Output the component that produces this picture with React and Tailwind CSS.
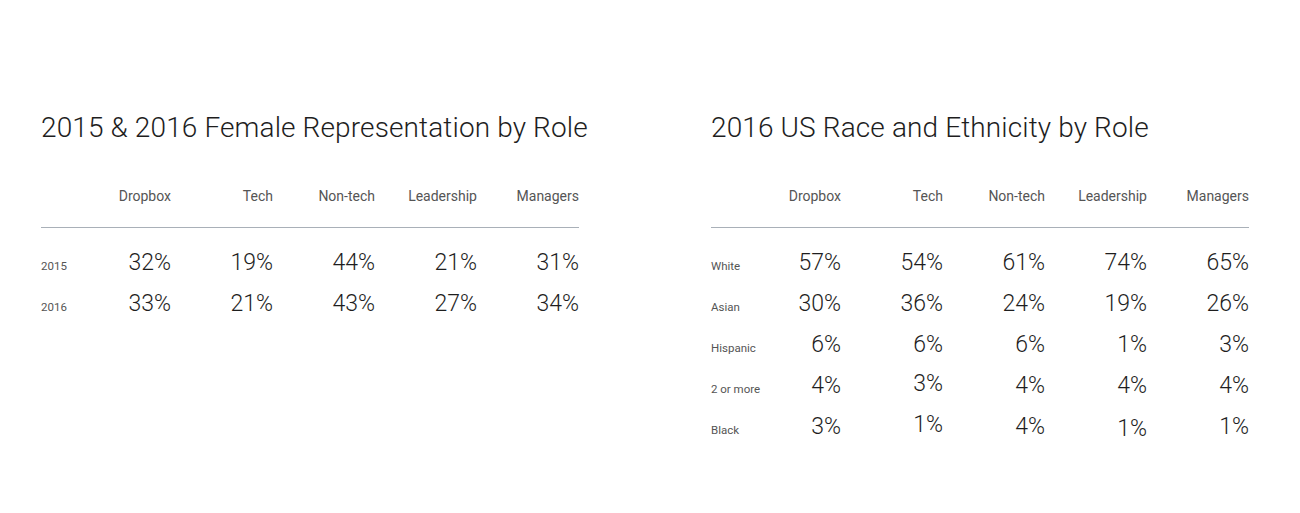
import React from "react";

const cols = ["Dropbox", "Tech", "Non-tech", "Leadership", "Managers"];

const female = [
  { label: "2015", values: ["32%", "19%", "44%", "21%", "31%"] },
  { label: "2016", values: ["33%", "21%", "43%", "27%", "34%"] },
];

const race = [
  { label: "White", values: ["57%", "54%", "61%", "74%", "65%"] },
  { label: "Asian", values: ["30%", "36%", "24%", "19%", "26%"] },
  { label: "Hispanic", values: ["6%", "6%", "6%", "1%", "3%"] },
  { label: "2 or more", values: ["4%", "3%", "4%", "4%", "4%"], nudge: [0, -2, 0, 0, 0] },
  { label: "Black", values: ["3%", "1%", "4%", "1%", "1%"], nudge: [0, -2, 0, 2, 0] },
];

function StatTable({ title, rows }) {
  return (
    <div className="w-[538px]">
      <h2 className="text-[28px] leading-none font-light text-[#1e1e1e] h-[28px] whitespace-nowrap tracking-[0.12px]">
        {title}
      </h2>
      <div className="grid grid-cols-[28px_repeat(5,102px)] mt-[45px] text-[14px] text-[#555] pb-[22px] border-b border-[#a9b0b8]">
        <div />
        {cols.map((c) => (
          <div key={c} className="text-right leading-[18px]">
            {c}
          </div>
        ))}
      </div>
      <div className="pt-[23px]">
        {rows.map((r) => (
          <div key={r.label} className="grid grid-cols-[28px_repeat(5,102px)] h-[41px] items-start">
            <div className="text-[11.5px] text-[#555] whitespace-nowrap pt-[7px]">{r.label}</div>
            {r.values.map((v, i) => (
              <div
                key={i}
                className={
                  "text-right text-[23px] leading-[24px] text-[#1e1e1e] font-light " +
                  (r.nudge && r.nudge[i] === -2 ? "-mt-[2px]" : r.nudge && r.nudge[i] === 2 ? "mt-[2px]" : "")
                }
              >
                {v}
              </div>
            ))}
          </div>
        ))}
      </div>
    </div>
  );
}

export default function App() {
  return (
    <div className="w-[1300px] h-[513px] bg-white font-['Roboto',sans-serif]">
      <div className="flex gap-[132px] pl-[41px] pt-[114px]">
        <StatTable title="2015 & 2016 Female Representation by Role" rows={female} />
        <StatTable title="2016 US Race and Ethnicity by Role" rows={race} />
      </div>
    </div>
  );
}
